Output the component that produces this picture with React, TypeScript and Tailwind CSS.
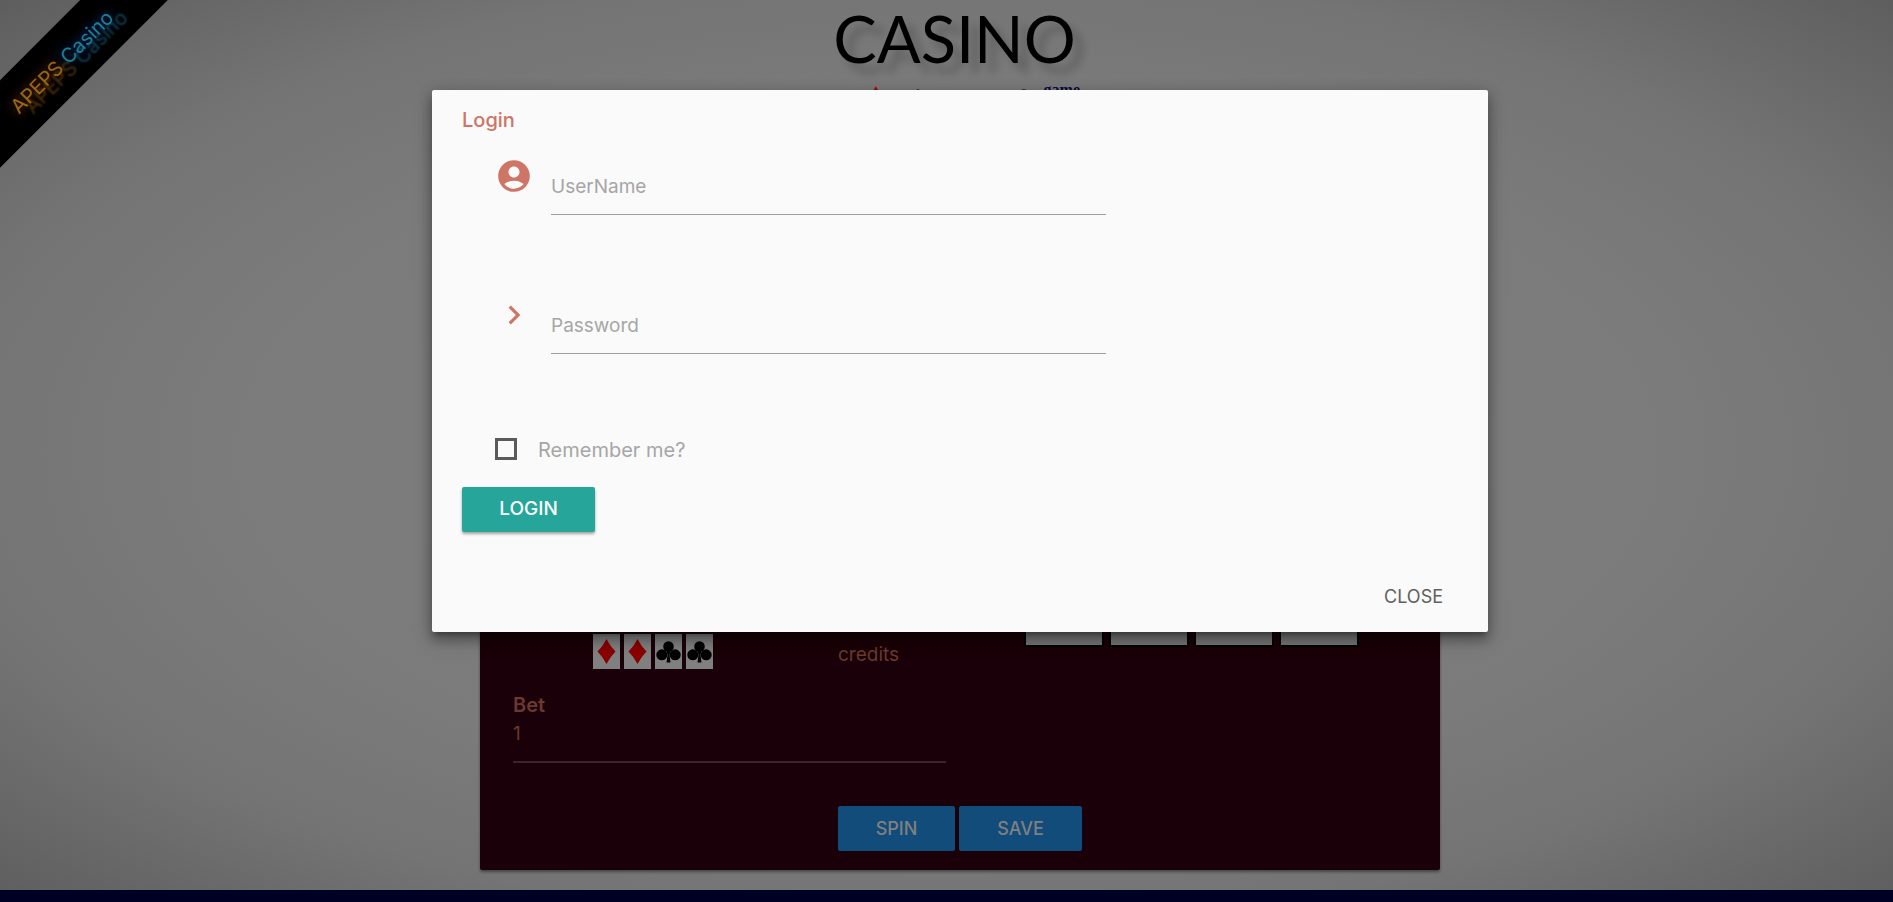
import React from "react";
import { MdAccountCircle, MdChevronRight } from "react-icons/md";

const RED = "text-[#ce7566]";

function Ribbon() {
  return (
    <a
      href="#home"
      className="absolute -left-24 top-[31px] flex h-[62px] w-[316px] -rotate-45 items-center justify-center gap-[6px] bg-black text-[20px]"
    >
      <span className="text-[#9b6714] [text-shadow:10px_10px_2px_#4a3008,0_0_12px_#7a3a00]">APEPS</span>
      <span className="text-[#1f7d98] [text-shadow:10px_10px_2px_#0f4254,0_0_12px_#0b4fa0]">Casino</span>
    </a>
  );
}

function Diamond() {
  return (
    <svg viewBox="0 0 27 35" className="h-[35px] w-[27px] bg-[#808080]" aria-hidden="true">
      <path d="M13.5 5 Q17 12 22.5 17.5 Q17 23 13.5 30 Q10 23 4.5 17.5 Q10 12 13.5 5Z" fill="#8a0000" />
    </svg>
  );
}

function Club() {
  return (
    <svg viewBox="0 0 27 35" className="h-[35px] w-[27px] bg-[#808080]" aria-hidden="true">
      <circle cx="13.5" cy="12.5" r="5.3" />
      <circle cx="6.8" cy="20.8" r="5.5" />
      <circle cx="20.2" cy="20.8" r="5.5" />
      <path d="M11 15h5l-1.5 6 1 7.5h-4l1-7.5z" />
    </svg>
  );
}

function Field({ id, label, type, icon }: { id: string; label: string; type: string; icon: React.ReactNode }) {
  return (
    <div className="flex h-[139px] items-start pl-[33px]">
      <span className={`flex w-14 ${RED}`}>{icon}</span>
      <div className="grid w-[555px]">
        <input
          id={id}
          type={type}
          placeholder=" "
          className="peer col-start-1 row-start-1 h-[58px] w-full border-b border-[#9e9e9e] bg-transparent text-[19px] text-[#555] outline-none"
        />
        <label
          htmlFor={id}
          className="pointer-events-none invisible col-start-1 row-start-1 pt-4 text-[19px] leading-7 text-[#a6a6a6] peer-placeholder-shown:visible"
        >
          {label}
        </label>
      </div>
    </div>
  );
}

function LoginDialog() {
  return (
    <div className="absolute inset-x-0 top-[10vh] flex justify-center pl-[27px]">
      <section
        role="dialog"
        aria-labelledby="login-title"
        className="w-full max-w-[1056px] rounded-[2px] bg-[#fafafa] shadow-[0_8px_10px_1px_rgba(0,0,0,0.14),0_3px_14px_2px_rgba(0,0,0,0.12),0_5px_5px_-3px_rgba(0,0,0,0.3),0_8px_20px_rgba(0,0,0,0.2)]"
      >
        <form className="px-[30px] pt-4" onSubmit={(e) => e.preventDefault()}>
          <h4 id="login-title" className={`h-[51px] text-[20px] leading-7 font-medium ${RED}`}>Login</h4>
          <Field id="username" label="UserName" type="text" icon={<MdAccountCircle size={38} />} />
          <Field id="password" label="Password" type="password" icon={<MdChevronRight size={38} />} />
          <div className="flex h-[52px] items-start gap-[21px] pl-[33px] pt-[3px]">
            <input id="remember" type="checkbox" className="size-[22px] appearance-none border-[3px] border-[#5a5a5a] checked:bg-[#26a69a]" />
            <label htmlFor="remember" className="text-[20px] leading-6 text-[#a6a6a6]">Remember me?</label>
          </div>
          <button className="h-[45px] w-[133px] rounded-[2px] bg-[#26a69a] text-[19px] font-medium text-white shadow-[0_2px_3px_rgba(0,0,0,0.35)]">
            LOGIN
          </button>
        </form>
        <div className="flex h-[100px] items-end justify-end px-[45px] pb-[23px]">
          <button className="text-[18px] leading-6 text-[#606060]">CLOSE</button>
        </div>
      </section>
    </div>
  );
}

export default function App() {
  return (
    <div className="relative flex min-h-screen flex-col overflow-hidden bg-[radial-gradient(ellipse_at_center,#7f7f7f_0%,#7b7b7b_55%,#747474_75%,#5e5e5e_100%)] font-[Inter,sans-serif]">
      <Ribbon />
      <header className="flex h-20 justify-center pl-[16px]">
        <h1 className="font-[Lato,sans-serif] text-[65px] leading-[76px] text-black [text-shadow:10px_10px_8px_rgba(0,0,0,0.2)]">
          CASINO
        </h1>
      </header>
      <main className="flex grow flex-col items-center pl-[27px]">
        <div className="flex h-[46px] w-[240px] items-start gap-[7px] pl-6">
          <svg viewBox="0 0 176 40" className="h-10 w-44" aria-hidden="true">
            <path d="M12 6l10 16-10 16L2 22z" fill="#a01000" />
            <circle cx="55" cy="11" r="2" fill="#111" />
            <ellipse cx="163" cy="18" rx="9" ry="9" fill="#111" />
          </svg>
          <b className="font-[Liberation_Serif,serif] text-[16px] leading-5 text-[#0b0a3a]">game</b>
        </div>
        <section className="flex w-full max-w-[960px] grow flex-col rounded-[2px] bg-[#1a0008] px-[33px] pb-[19px] shadow-[0_2px_3px_rgba(0,0,0,0.4)]">
          <div className="flex h-[567px] items-end">
            <div className="flex h-full w-[325px] items-end gap-1 pb-6 pl-20">
              <Diamond />
              <Diamond />
              <Club />
              <Club />
            </div>
            <p className="w-[186px] pb-6 text-[19px] leading-7 text-[#6b392f]">credits</p>
            <div className="flex gap-[5px] pb-[46px]">
              {[0, 1, 2, 3].map((reel) => (
                <div key={reel} className="h-[110px] w-[80px] border-2 border-black bg-[#777]" />
              ))}
            </div>
          </div>
          <label htmlFor="bet" className="text-[20px] leading-6 font-semibold text-[#6b392f]">Bet</label>
          <input
            id="bet"
            defaultValue="1"
            className="h-[46px] w-[433px] border-b-2 border-[#38262b] bg-transparent pb-3 text-[19px] text-[#6b392f] outline-none"
          />
          <div className="mt-auto flex justify-center gap-1">
            <button className="h-[45px] w-[117px] rounded-[2px] bg-[#114c7a] text-[18px] font-medium text-[#808080]">SPIN</button>
            <button className="h-[45px] w-[123px] rounded-[2px] bg-[#114c7a] text-[18px] font-medium text-[#808080]">SAVE</button>
          </div>
        </section>
      </main>
      <footer className="mt-5 h-3 bg-[#000025]" />
      <LoginDialog />
    </div>
  );
}
